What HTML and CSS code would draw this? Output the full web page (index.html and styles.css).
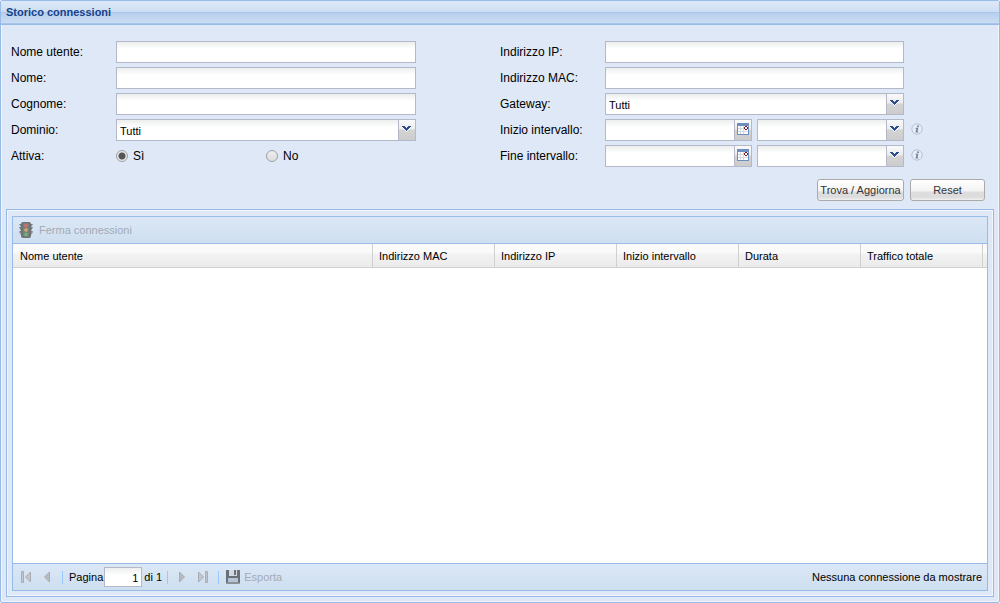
FILE: index.html
```html
<!DOCTYPE html>
<html lang="it">
<head>
<meta charset="utf-8">
<title>Storico connessioni</title>
<link rel="stylesheet" href="styles.css">
</head>
<body>
<svg class="defs" aria-hidden="true">
  <symbol id="chevron" viewBox="0 0 9 6" shape-rendering="crispEdges">
    <path d="M0 1h3v1h3v-1h3v1h-1v1h-1v1h-1v1h-1v1h-1v-1h-1v-1h-1v-1h-1v-1h-1z" fill="#fff"/>
    <path d="M0 0h3v1h1v1h1v-1h1v-1h3v1h-1v1h-1v1h-1v1h-1v1h-1v-1h-1v-1h-1v-1h-1v-1h-1z" fill="#2d4d8e"/>
  </symbol>
  <symbol id="calendar" viewBox="0 0 12 12" shape-rendering="crispEdges">
    <path d="M0 0h12v12h-12z" fill="#6b8fbf"/>
    <path d="M1 3h10v8h-10z" fill="#fff"/>
    <path d="M3.500 3v8M6.500 3v8M1 5.500h10M1 8.500h10" stroke="#d5d9e0"/>
    <path d="M8 3h2v1h1v2h-1v1h-2v-1h-1v-2h1z" fill="#80101c"/>
    <path d="M8 4h2v2h-2z" fill="#fff"/>
  </symbol>
  <symbol id="info" viewBox="0 0 12 12">
    <circle cx="6" cy="6" r="5.200" fill="#e8edf5" stroke="#b4c2d8"/>
    <circle cx="7" cy="3.200" r="1" fill="#6d86a8"/>
    <path d="M4.500 4.800h2.900L6.500 8.500h.8v.9H4.500l.9-3.700h-.9z" fill="#6d86a8"/>
  </symbol>
</svg>
<main class="panel">
  <h1 class="panel-title">Storico connessioni</h1>
  <form class="search">
    <div class="fields">
      <div class="column">
        <div class="row"><label for="utente">Nome utente:</label><input class="box" id="utente" type="text"></div>
        <div class="row"><label for="nome">Nome:</label><input class="box" id="nome" type="text"></div>
        <div class="row"><label for="cognome">Cognome:</label><input class="box" id="cognome" type="text"></div>
        <div class="row"><label for="dominio">Dominio:</label>
          <span class="combo"><select class="box" id="dominio"><option>Tutti</option></select><span class="trigger"><svg class="chevron"><use href="#chevron"/></svg></span></span>
        </div>
        <fieldset class="row radios">
          <legend>Attiva:</legend>
          <label><input type="radio" name="attiva" checked>Sì</label>
          <label><input type="radio" name="attiva">No</label>
        </fieldset>
      </div>
      <div class="column right">
        <div class="row"><label for="ip">Indirizzo IP:</label><input class="box" id="ip" type="text"></div>
        <div class="row"><label for="mac">Indirizzo MAC:</label><input class="box" id="mac" type="text"></div>
        <div class="row"><label for="gateway">Gateway:</label>
          <span class="combo"><select class="box" id="gateway"><option>Tutti</option></select><span class="trigger"><svg class="chevron"><use href="#chevron"/></svg></span></span>
        </div>
        <div class="row"><label for="inizio">Inizio intervallo:</label>
          <span class="interval">
            <span class="combo"><input class="box" id="inizio" type="text"><button class="trigger" type="button" aria-label="Scegli data iniziale"><svg class="calendar"><use href="#calendar"/></svg></button></span>
            <span class="combo"><select class="box" aria-label="Ora iniziale"><option></option></select><span class="trigger"><svg class="chevron"><use href="#chevron"/></svg></span></span>
          </span>
          <svg class="info"><use href="#info"/></svg>
        </div>
        <div class="row"><label for="fine">Fine intervallo:</label>
          <span class="interval">
            <span class="combo"><input class="box" id="fine" type="text"><button class="trigger" type="button" aria-label="Scegli data finale"><svg class="calendar"><use href="#calendar"/></svg></button></span>
            <span class="combo"><select class="box" aria-label="Ora finale"><option></option></select><span class="trigger"><svg class="chevron"><use href="#chevron"/></svg></span></span>
          </span>
          <svg class="info"><use href="#info"/></svg>
        </div>
      </div>
    </div>
    <div class="actions">
      <button class="button find" type="button">Trova / Aggiorna</button>
      <button class="button reset" type="reset">Reset</button>
    </div>
  </form>
  <section class="frame">
    <div class="grid">
      <div class="toolbar">
        <button class="tool" type="button" disabled>
          <svg class="icon" viewBox="0 0 16 16">
            <path d="M1 2h14l-2 3h2l-2 4h2l-2 3H3L1 9h2L1 5h2z" fill="#7b8186"/>
            <path d="M1 10h14l-2 3H3z" fill="#8b9196"/>
            <rect x="3" y="0" width="10" height="16" rx="2" fill="#6d7378"/>
            <rect x="5" y="1" width="6" height="14" rx="2" fill="#7c7f7c"/>
            <circle cx="8" cy="3.500" r="1.800" fill="#d07163"/>
            <circle cx="8" cy="8" r="1.800" fill="#d9ab62"/>
            <circle cx="8" cy="12.500" r="1.800" fill="#62b977"/>
          </svg>
          Ferma connessioni
        </button>
      </div>
      <div class="rows">
        <table>
          <thead><tr><th>Nome utente</th><th class="fixed">Indirizzo MAC</th><th class="fixed">Indirizzo IP</th><th class="fixed">Inizio intervallo</th><th class="fixed">Durata</th><th class="fixed">Traffico totale</th><td class="gutter"></td></tr></thead>
          <tbody></tbody>
        </table>
      </div>
      <div class="toolbar pager">
        <button class="nav" type="button" disabled aria-label="Prima pagina"><svg viewBox="0 0 12 12"><path d="M1.500 .5h2v11h-2zM10.500 1v10L5.500 6z" fill="#c3c6ca" stroke="#a9adb3"/></svg></button>
        <button class="nav" type="button" disabled aria-label="Pagina precedente"><svg viewBox="0 0 12 12"><path d="M8.500 1v10L3.500 6z" fill="#b7babe" stroke="#a9adb3"/></svg></button>
        <span class="separator"></span>
        <label for="pagina">Pagina</label>
        <input class="box page" id="pagina" type="text" value="1">
        <span class="total">di 1</span>
        <span class="separator"></span>
        <button class="nav" type="button" disabled aria-label="Pagina successiva"><svg viewBox="0 0 12 12"><path d="M3.500 1v10l5-5z" fill="#b7babe" stroke="#a9adb3"/></svg></button>
        <button class="nav" type="button" disabled aria-label="Ultima pagina"><svg viewBox="0 0 12 12"><path d="M8.500 .5h2v11h-2zM1.500 1v10l5-5z" fill="#c3c6ca" stroke="#a9adb3"/></svg></button>
        <span class="separator"></span>
        <button class="tool export" type="button" disabled>
          <svg class="icon" viewBox="0 0 16 16">
            <path d="M1 1h14v13l-1 1H2l-1-1z" fill="#6b7078"/>
            <path d="M4 1h8v6H4z" fill="#d3dae2"/>
            <path d="M9 1h2v5H9z" fill="#6b7078"/>
            <path d="M3 9h10v4H3z" fill="#b5c5d9"/>
            <path d="M2 13h12v2H2z" fill="#8b9199"/>
          </svg>
          Esporta
        </button>
        <span class="status">Nessuna connessione da mostrare</span>
      </div>
    </div>
  </section>
</main>
</body>
</html>
```

FILE: styles.css
```css
* { box-sizing: border-box; }
body {
  margin: 0;
  font: 11px/14px "Liberation Sans", Arial, sans-serif;
  color: #000;
}
button, input, select { font: inherit; color: inherit; margin: 0; }
svg { display: block; flex: none; }
.defs { position: absolute; width: 0; height: 0; }
.panel {
  display: flex;
  flex-direction: column;
  min-height: 100vh;
  border: 1px solid #99bbe8;
  border-radius: 2px;
  background: #dfe8f6;
  box-shadow: inset 1px 1px #f1f5fb, inset -1px -1px #f1f5fb;
}
.panel-title {
  height: 24px;
  margin: 0;
  padding: 0 5px;
  border-bottom: 1px solid #99bbe8;
  background: linear-gradient(#dae7f6 0 2px, #cddef3 11px, #abc7ec 11px 12px, #b8cfee 12px, #cbddf3 22px, #a7c4ec 22px);
  font-size: 11px;
  line-height: 23px;
  color: #15428b;
}
.search { padding: 16px 10px 8px; }
.fields { display: grid; grid-template-columns: 1fr 1fr; }
.column { display: grid; row-gap: 4px; }
.row {
  display: flex;
  align-items: center;
  height: 22px;
  font-size: 12px;
}
.row > label, .radios legend { flex: none; width: 105px; }
.row > .box, .row > .combo, .interval { flex: none; width: 300px; }
.right .row > .box, .right .row > .combo, .right .interval { width: 299px; }
.box {
  width: 100%;
  height: 22px;
  padding: 2px 3px 0;
  border: 1px solid #b5b8c8;
  border-radius: 0;
  outline: none;
  appearance: none;
  background: linear-gradient(#eceeee, #fff 7px);
  font-size: 11px;
}
.combo { position: relative; display: block; }
.combo .box { display: block; padding-right: 20px; }
.trigger {
  position: absolute;
  top: 1px;
  right: 1px;
  display: grid;
  place-items: center;
  width: 17px;
  height: 20px;
  padding: 0 0 2px;
  border: 0;
  border-left: 1px solid #b5b8c8;
  background: linear-gradient(#fafafa, #ececec 9px, #d4d4d4 10px, #ccc);
}
span.trigger { padding-right: 2px; pointer-events: none; }
.chevron { width: 9px; height: 6px; }
.calendar { width: 12px; height: 12px; }
.interval { display: grid; grid-template-columns: 1fr 1fr; gap: 5px; }
.info { width: 12px; height: 12px; margin: 0 0 2px 7px; }
.radios { margin: 0; padding: 0; border: 0; }
.radios legend { float: left; padding: 0; }
.radios label { display: flex; align-items: center; gap: 5px; width: 150px; }
.radios input {
  width: 12px;
  height: 12px;
  border: 1px solid #a0a0a0;
  border-radius: 50%;
  appearance: none;
  background: linear-gradient(#eee, #ddd);
}
.radios input:checked { background: radial-gradient(circle, #555 0 3px, #e6e6e6 4px); }
.actions { display: flex; justify-content: flex-end; gap: 6px; padding: 12px 4px 0 0; }
.button {
  height: 22px;
  padding: 0 2px;
  border: 1px solid #aaa;
  border-radius: 3px;
  background: linear-gradient(#fff, #f3f3f3 11px, #dedede 12px, #dcdcdc 17px, #f0f0f0);
  color: #333;
  white-space: nowrap;
}
.find { width: 87px; }
.reset { width: 75px; }
.frame {
  display: flex;
  flex: 1;
  margin: 0 5px 5px;
  padding: 6px 5px 5px;
  border: 1px solid #99bbe8;
  box-shadow: inset 1px 1px #f1f5fb, inset -1px -1px #f1f5fb;
}
.grid {
  display: flex;
  flex: 1;
  flex-direction: column;
  min-width: 0;
  border: 1px solid #99bbe8;
  background: #fff;
}
.toolbar {
  display: flex;
  align-items: center;
  height: 27px;
  padding: 0 5px;
  border-bottom: 1px solid #99bbe8;
  background: linear-gradient(#dbe7f6, #cedff0);
}
.tool {
  display: flex;
  align-items: center;
  gap: 5px;
  padding: 0;
  border: 0;
  background: none;
  color: #a3aab3;
}
.export { gap: 3px; }
.icon { width: 16px; height: 16px; }
.rows { flex: 1; }
table { width: 100%; table-layout: fixed; border-spacing: 0; }
th, .gutter {
  height: 24px;
  padding: 0 6px;
  border-right: 1px solid #d0d0d0;
  border-bottom: 1px solid #d0d0d0;
  background: linear-gradient(#fafafa 0 9px, #f2f2f2 10px, #ebebeb);
  font-weight: normal;
  text-align: left;
}
th:first-child { padding-left: 7px; }
.fixed { width: 122px; }
.gutter { width: 4px; padding: 0; border-right: 0; }
.pager { height: 27px; border-top: 1px solid #99bbe8; border-bottom: 0; }
.nav { width: 21px; height: 20px; padding: 0 7px 0 2px; border: 0; background: none; }
.nav svg { width: 12px; height: 12px; }
.separator { width: 1px; height: 13px; margin: 0 6px 0 2px; background: #98c8ff; }
.page { width: 38px; height: 20px; margin: 0 2px 0 1px; text-align: right; }
.total { min-width: 21px; }
.status { margin-left: auto; white-space: nowrap; }
```
